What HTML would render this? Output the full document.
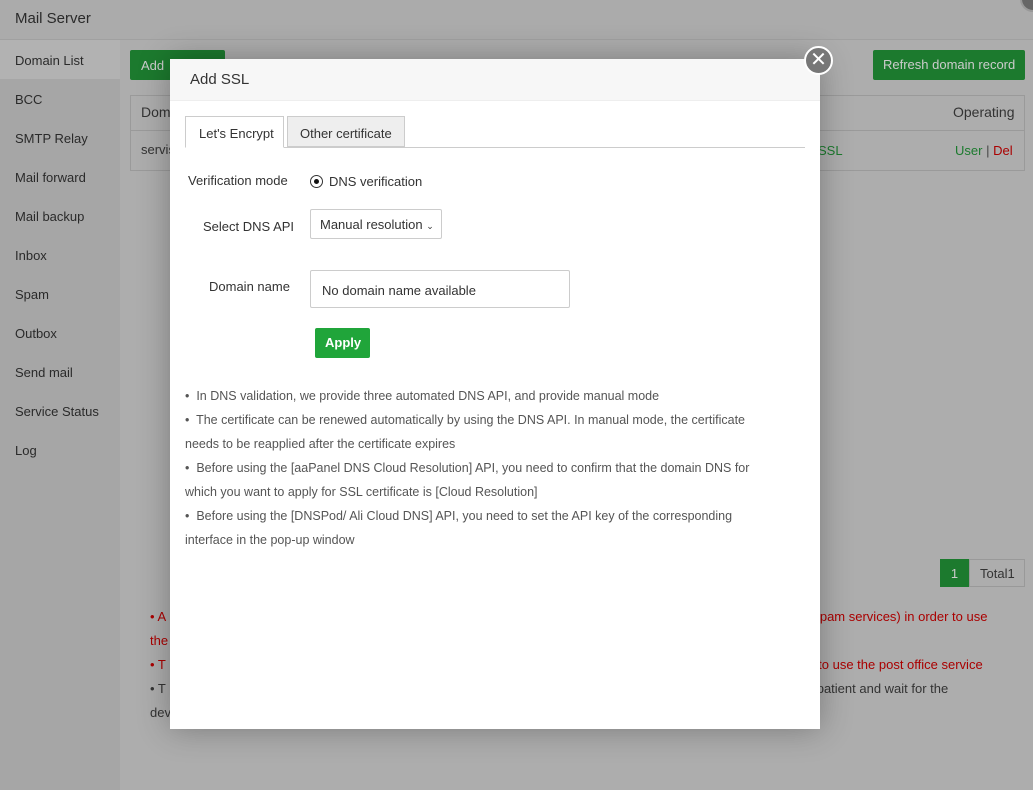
<!DOCTYPE html>
<html><head><meta charset="utf-8"><style>
*{margin:0;padding:0;box-sizing:border-box}
body{width:1033px;height:790px;overflow:hidden;background:#adadad;font-family:"Liberation Sans",sans-serif;font-size:13px;color:#333;position:relative}
.a{position:absolute;white-space:nowrap}
.side{position:absolute;left:0;top:40px;width:120px;height:750px;background:#a6a6a6}
.side div{position:absolute;left:15px;font-size:13px;color:#2a2a2a}
.g{color:#ccc;background:#1c7a2e;border-radius:2px}
.modal{position:absolute;left:170px;top:59px;width:650px;height:670px;background:#fff;box-shadow:0 0 30px rgba(0,0,0,.3)}
.tip{position:absolute;left:15px;width:590px;font-size:12.5px;color:#555;line-height:24px;white-space:normal}
</style></head><body>
<div class="a" style="left:0;top:0;width:1033px;height:40px;background:#ababab;border-bottom:1px solid #a0a0a0"></div>
<div class="a" style="left:15px;top:10px;font-size:15px;color:#2a2a2a">Mail Server</div>
<div class="side">
<div style="left:0;top:0;width:120px;height:39px;background:#b2b2b2"></div>
<div style="top:13px">Domain List</div><div style="top:52px">BCC</div><div style="top:91px">SMTP Relay</div><div style="top:130px">Mail forward</div><div style="top:169px">Mail backup</div><div style="top:208px">Inbox</div><div style="top:247px">Spam</div><div style="top:286px">Outbox</div><div style="top:325px">Send mail</div><div style="top:364px">Service Status</div><div style="top:403px">Log</div>
</div>
<div class="a g" style="left:130px;top:50px;width:95px;height:30px;padding:8px 11px">Add</div>
<div class="a g" style="left:873px;top:50px;width:152px;height:30px;padding:7px 10px">Refresh domain record</div>
<div class="a" style="left:130px;top:95px;width:895px;height:76px;border:1px solid #9a9a9a"></div>
<div class="a" style="left:130px;top:130px;width:895px;height:1px;background:#9a9a9a"></div>
<div class="a" style="left:141px;top:104px;color:#333;font-size:14px">Dom</div>
<div class="a" style="left:141px;top:142px;color:#333">servis</div>
<div class="a" style="left:953px;top:104px;font-size:14px;color:#333">Operating</div>
<div class="a" style="left:818px;top:143px;color:#1c7a2e">SSL</div>
<div class="a" style="left:955px;top:143px;color:#1c7a2e">User <span style="color:#444">|</span> <span style="color:#a00">Del</span></div>
<div class="a" style="left:940px;top:559px;width:29px;height:28px;background:#1c7a2e;color:#ccc;text-align:center;padding-top:7px">1</div>
<div class="a" style="left:969px;top:559px;width:56px;height:28px;border:1px solid #999;padding:6px 10px;color:#333">Total1</div>
<div class="a" style="left:150px;top:609px;color:#a00">• A<span style="margin-left:640px">i-spam services) in order to use</span></div>
<div class="a" style="left:150px;top:633px;color:#a00">the</div>
<div class="a" style="left:150px;top:657px;color:#a00">• T<span style="margin-left:640px">S to use the post office service</span></div>
<div class="a" style="left:150px;top:681px;color:#333">• T<span style="margin-left:640px">e patient and wait for the</span></div>
<div class="a" style="left:150px;top:705px;color:#333">dev</div>
<div class="modal">
<div class="a" style="left:0;top:0;width:650px;height:42px;background:#f7f7f7;border-bottom:1px solid #eee"></div>
<div class="a" style="left:20px;top:12px;font-size:15px;color:#333">Add SSL</div>
<div class="a" style="left:15px;top:88px;width:620px;height:1px;background:#ccc"></div>
<div class="a" style="left:15px;top:57px;width:99px;height:32px;border:1px solid #ccc;border-bottom:1px solid #fff;background:#fff;padding:9px 0 0 13px;font-size:13px">Let's Encrypt</div>
<div class="a" style="left:117px;top:57px;width:118px;height:31px;border:1px solid #ccc;background:#eee;padding:9px 0 0 12px;font-size:13px">Other certificate</div>
<div class="a" style="left:18px;top:114px;color:#333">Verification mode</div>
<div class="a" style="left:140px;top:116px;width:13px;height:13px;border:1px solid #333;border-radius:50%"><div style="position:absolute;left:3px;top:3px;width:5px;height:5px;border-radius:50%;background:#111"></div></div>
<div class="a" style="left:159px;top:115px;color:#333">DNS verification</div>
<div class="a" style="left:33px;top:160px;color:#333">Select DNS API</div>
<div class="a" style="left:140px;top:150px;width:132px;height:30px;border:1px solid #ccc;border-radius:2px;padding:7px 0 0 9px;color:#333">Manual resolution <span style="font-size:9px">&#8964;</span></div>
<div class="a" style="left:39px;top:220px;color:#333">Domain name</div>
<div class="a" style="left:140px;top:211px;width:260px;height:38px;border:1px solid #ccc;border-radius:2px;padding:12px 0 0 11px;color:#333">No domain name available</div>
<div class="a" style="left:145px;top:269px;width:55px;height:30px;background:#20a53a;border-radius:2px;color:#fff;font-weight:bold;padding:7px 0 0 10px">Apply</div>
<div class="tip" style="top:325px">•&nbsp; In DNS validation, we provide three automated DNS API, and provide manual mode<br>•&nbsp; The certificate can be renewed automatically by using the DNS API. In manual mode, the certificate needs to be reapplied after the certificate expires<br>•&nbsp; Before using the [aaPanel DNS Cloud Resolution] API, you need to confirm that the domain DNS for which you want to apply for SSL certificate is [Cloud Resolution]<br>•&nbsp; Before using the [DNSPod/ Ali Cloud DNS] API, you need to set the API key of the corresponding interface in the pop-up window</div>
</div>
<div class="a" style="left:804px;top:46px;width:29px;height:29px;border-radius:50%;background:#777;border:2px solid #fff;color:#fff;text-align:center;font-size:20px;line-height:24px">&#x2715;</div>
<div class="a" style="left:1020px;top:-14px;width:26px;height:26px;border-radius:50%;background:#666;border:2px solid #999"></div>
</body></html>
